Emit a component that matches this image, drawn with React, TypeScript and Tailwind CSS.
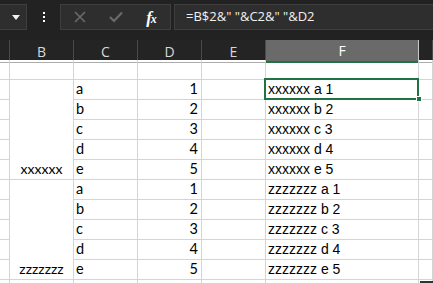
import { Fragment } from "react";

const groups = [
  { label: "xxxxxx", rows: ["a", "b", "c", "d", "e"] },
  { label: "zzzzzzz", rows: ["a", "b", "c", "d", "e"] },
];

const cols = ["", "B", "C", "D", "E", "F", ""];

const cell = "border-r border-b border-[#d4d4d4]";

const App = () => {
  return (
    <div className="relative w-[433px] h-[283px] overflow-hidden bg-white">
      {/* formula bar */}
      <div className="h-[40px] bg-[#222222] flex items-start pt-[4px] gap-[3px]">
        <div className="w-[27px] h-[26px] bg-[#2e2e2e] border border-[#3e3e3e] border-l-0 flex items-center justify-end pr-[6px]">
          <svg width="8" height="5" viewBox="0 0 8 5">
            <path d="M0 0 H8 L4 5 Z" fill="#f2f2f2" />
          </svg>
        </div>
        <div className="w-[27px] h-[26px] flex flex-col items-center justify-center gap-[2px]">
          <span className="w-[2px] h-[2px] bg-white" />
          <span className="w-[2px] h-[2px] bg-white" />
          <span className="w-[2px] h-[2px] bg-white" />
        </div>
        <div className="w-[111px] h-[26px] bg-[#2e2e2e] border border-[#3e3e3e] flex items-center">
          <div className="w-[38px] flex justify-center">
            <svg width="12" height="12" viewBox="0 0 12 12">
              <path d="M1 1 L11 11 M11 1 L1 11" stroke="#6a6a6a" strokeWidth="1.6" />
            </svg>
          </div>
          <div className="w-[34px] flex justify-center">
            <svg width="14" height="12" viewBox="0 0 14 12">
              <path d="M1 6 L5 10 L13 1.5" stroke="#6a6a6a" strokeWidth="2.2" fill="none" />
            </svg>
          </div>
          <div className="w-[36px] flex justify-center">
            <span className="text-white italic font-bold text-[17px] font-['Liberation_Serif',serif] leading-none tracking-[-1px]">
              f<span className="text-[12px]">x</span>
            </span>
          </div>
        </div>
        <div className="flex-1 h-[26px] bg-[#2e2e2e] border border-[#3e3e3e] border-r-0 flex items-center pl-[11px]">
          <span className="text-[#f0f0f0] text-[13px] font-['Open_Sans',sans-serif]">
            =B$2&amp;" "&amp;C2&amp;" "&amp;D2
          </span>
        </div>
      </div>

      {/* column headers */}
      <div className="grid grid-cols-[10px_64px_64px_64px_64px_153px_1fr] h-[20px] bg-[#242424] font-['Open_Sans',sans-serif] text-[14px] text-[#d8d8d8]">
        {cols.map((c, i) => (
          <div
            key={i}
            className={
              c === "F"
                ? "bg-[#6a6a6a] border-r border-[#c8c8c8] border-b-2 border-b-[#217346] text-white flex items-center justify-center"
                : "border-r border-[#4a4a4a] border-b border-b-[#ababab] flex items-center justify-center"
            }
          >
            {c}
          </div>
        ))}
      </div>

      {/* sheet */}
      <div className="grid grid-cols-[10px_64px_64px_64px_64px_153px_1fr] grid-rows-[repeat(12,20px)] text-black">
        {cols.map((_, i) => (
          <div key={"r1" + i} className={cell} />
        ))}
        {groups.map((g) =>
          g.rows.map((r, ri) => (
            <Fragment key={g.label + r}>
              <div className={cell} />
              {ri === 0 && (
                <div className={cell + " row-span-5 flex items-end justify-center pb-[1px] font-['Lato',sans-serif] text-[14px] leading-[18px]"}>
                  {g.label}
                </div>
              )}
              <div className={cell + " flex items-end pl-[2px] pb-[1px] font-['Lato',sans-serif] text-[14.5px] leading-[18px]"}>
                {r}
              </div>
              <div className={cell + " flex items-end justify-end pr-[3px] pb-[1px] font-['Lato',sans-serif] text-[14.5px] leading-[18px]"}>
                {ri + 1}
              </div>
              <div className={cell} />
              <div className={cell + " flex items-end pl-[2px] pb-[1px] font-['Liberation_Sans',sans-serif] text-[14px] leading-[18px]"}>
                {g.label} {r} {ri + 1}
              </div>
              <div className={cell} />
            </Fragment>
          ))
        )}
        {cols.map((_, i) => (
          <div key={"r12" + i} className={cell} />
        ))}
      </div>

      {/* active cell F2 */}
      <div className="absolute left-[264px] top-[78px] w-[155px] h-[22px] border-2 border-[#217346]" />
      <div className="absolute left-[416px] top-[96px] w-[6px] h-[6px] bg-[#217346] border border-white" />
      <div className="absolute right-0 bottom-0 w-[13px] h-[2px] bg-[#333333]" />
    </div>
  );
};

export default App;
